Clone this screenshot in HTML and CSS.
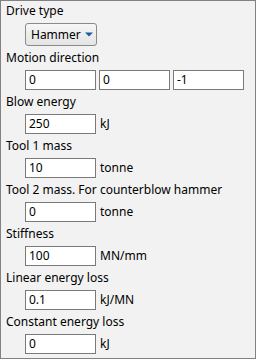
FILE: index.html
```html
<!DOCTYPE html>
<html>
<head>
<meta charset="utf-8">
<link rel="stylesheet" href="styles.css">
</head>
<body>
<div class="panel">
  <div class="label">Drive type</div>
  <div class="row">
    <div class="dropdown"><span>Hammer</span><svg class="caret" width="8" height="5" viewBox="0 0 8 5"><path d="M0 0.5H8L4 4.5Z" fill="#1c5a9e"/></svg></div>
  </div>
  <div class="label">Motion direction</div>
  <div class="row triple">
    <div class="field">0</div><div class="field">0</div><div class="field">-1</div>
  </div>
  <div class="label">Blow energy</div>
  <div class="row"><div class="field">250</div><span class="unit">kJ</span></div>
  <div class="label">Tool 1 mass</div>
  <div class="row"><div class="field">10</div><span class="unit">tonne</span></div>
  <div class="label">Tool 2 mass. For counterblow hammer</div>
  <div class="row"><div class="field">0</div><span class="unit">tonne</span></div>
  <div class="label">Stiffness</div>
  <div class="row"><div class="field">100</div><span class="unit">MN/mm</span></div>
  <div class="label">Linear energy loss</div>
  <div class="row"><div class="field">0.1</div><span class="unit">kJ/MN</span></div>
  <div class="label">Constant energy loss</div>
  <div class="row"><div class="field">0</div><span class="unit">kJ</span></div>
</div>
</body>
</html>
```
FILE: styles.css
```css
html, body {
  margin: 0;
  padding: 0;
  background: #f2f2f2;
}
.panel {
  width: 256px;
  height: 359px;
  box-sizing: border-box;
  border: 1px solid #828282;
  background: #f2f2f2;
  padding: 2px 0 0 4px;
  font-family: "Noto Sans", sans-serif;
  font-size: 12px;
  color: #000;
}
.label {
  height: 16px;
  line-height: 16px;
  margin-bottom: 4px;
  padding-left: 1px;
  white-space: nowrap;
}
.row {
  display: flex;
  align-items: center;
  gap: 3px;
  padding-left: 20px;
  margin-bottom: 4px;
}
.dropdown {
  width: 72px;
  height: 23px;
  box-sizing: border-box;
  border: 1px solid #8a8a8a;
  border-radius: 3px;
  background: linear-gradient(#f6f6f6, #e4e4e4);
  display: flex;
  align-items: center;
  gap: 4px;
  padding: 0 0 0 5px;
  line-height: 16px;
  white-space: nowrap;
}
.caret {
  display: block;
  flex: none;
}
.field {
  width: 71px;
  height: 20px;
  box-sizing: border-box;
  border: 1px solid #7a7a7a;
  background: #fff;
  line-height: 18px;
  padding-left: 3px;
}
.unit {
  margin-left: 1px;
  line-height: 16px;
}
```
